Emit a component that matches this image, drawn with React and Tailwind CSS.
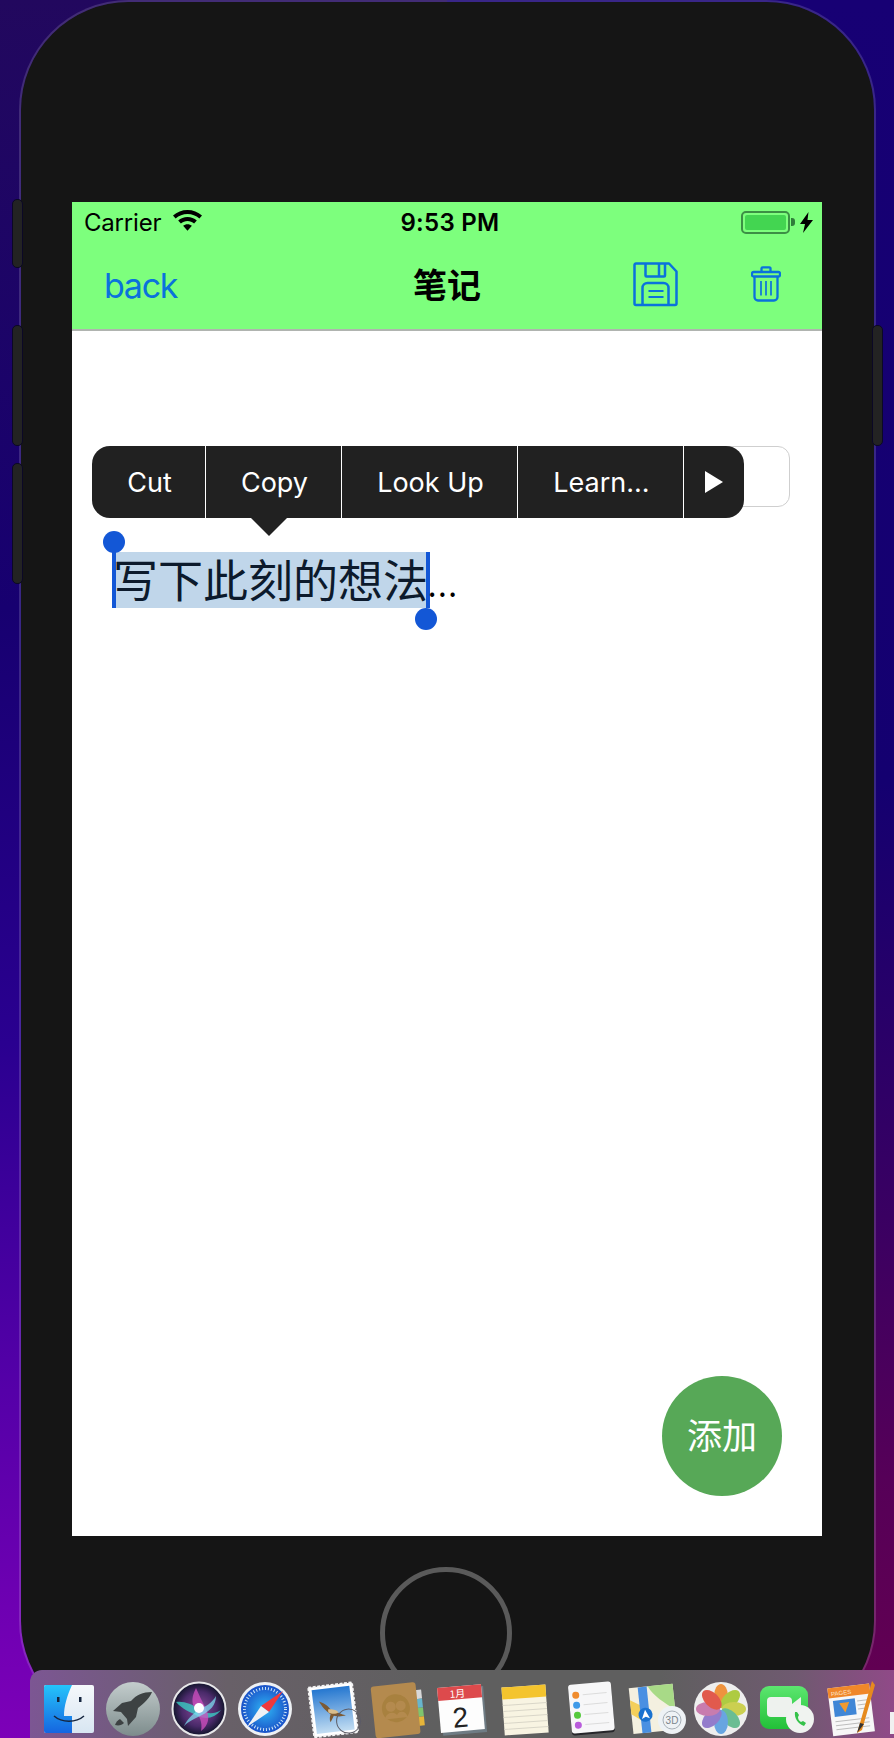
import React from 'react'

const sans = 'font-["Inter","Noto_Sans_CJK_SC",sans-serif]'

function SideButton({ className }) {
  return <div className={`absolute z-20 w-[11px] rounded-[5px] bg-[#232323] border border-[#0b0826] ${className}`} />
}

function Wifi() {
  return (
    <svg width="29" height="21" viewBox="0 0 29 21" fill="#000">
      <path d="M14.5 0C9 0 4 2 0 5.6l2.6 2.9C6 5.5 10 3.9 14.5 3.9s8.500 1.600 11.900 4.600L29 5.600C25 2 20 0 14.500 0z" />
      <path d="M14.500 7c-3.600 0-6.800 1.300-9.300 3.500l2.700 3c1.800-1.500 4.100-2.500 6.600-2.500s4.800 1 6.600 2.500l2.700-3C21.300 8.300 18.100 7 14.500 7z" />
      <path d="M14.500 14.200c-1.700 0-3.200.6-4.400 1.600l4.400 5 4.400-5c-1.200-1-2.700-1.600-4.400-1.600z" />
    </svg>
  )
}

function Battery() {
  return (
    <div className="flex items-center">
      <div className="w-[49px] h-[23px] rounded-[5px] border-2 border-[#3c8f45] p-[2px]">
        <div className="w-full h-full rounded-[2px] bg-[#43d551]" />
      </div>
      <div className="w-[4px] h-[8px] ml-[1px] rounded-r-[3px] bg-[#2f7d3a]" />
      <svg className="ml-[5px]" width="13" height="21" viewBox="0 0 13 21" fill="#000">
        <path d="M8.500 0L0 12h5l-2 9 10-13H7.500z" />
      </svg>
    </div>
  )
}

function SaveIcon() {
  return (
    <svg className="block" width="45" height="45" viewBox="0 0 45 45" fill="none" stroke="#0a72dc" strokeWidth="2.500" strokeLinejoin="round">
      <path d="M1.500 3a1.500 1.500 0 0 1 1.500-1.500h33l7.500 8v32a1.500 1.500 0 0 1-1.500 1.500H3a1.500 1.500 0 0 1-1.500-1.500z" />
      <path d="M12.500 2v11.500a1 1 0 0 0 1 1H31a1 1 0 0 0 1-1V2" />
      <path d="M26 2v12" />
      <path d="M9.500 43V26a5 5 0 0 1 5-5h16a5 5 0 0 1 5 5v17" />
      <path d="M15.500 29h15M15.500 35h15" strokeWidth="2.200" />
    </svg>
  )
}

function TrashIcon() {
  return (
    <svg className="block" width="30" height="36" viewBox="0 0 30 36" fill="none" stroke="#0a72dc" strokeWidth="2.300" strokeLinejoin="round">
      <rect x="1" y="6" width="28" height="4.500" rx="1.500" />
      <path d="M10.500 6V2.500a1.200 1.200 0 0 1 1.200-1.200h6.600a1.200 1.200 0 0 1 1.200 1.200V6" />
      <path d="M3.500 10.500V31a3.500 3.500 0 0 0 3.500 3.500h16a3.500 3.500 0 0 0 3.500-3.500V10.500" />
      <path d="M10 15v14.500M15 15v14.500M20 15v14.500" strokeWidth="1.700" />
    </svg>
  )
}

function ContextMenu() {
  const items = [
    { label: 'Cut', w: 'w-[114px]' },
    { label: 'Copy', w: 'w-[136px]' },
    { label: 'Look Up', w: 'w-[176px]' },
    { label: 'Learn...', w: 'w-[166px]' },
  ]
  return (
    <div className="absolute left-[20px] top-[115px] w-[652px]">
      <div className="flex h-[72px] rounded-[18px] bg-[#212121] overflow-hidden">
        {items.map(it => (
          <div key={it.label} className={`${it.w} flex items-center justify-center border-r border-white text-white text-[27px] pl-[2px] pt-[2px]`}>
            {it.label}
          </div>
        ))}
        <div className="flex-1 flex items-center justify-center">
          <div className="w-0 h-0 border-y-[11px] border-y-transparent border-l-[18px] border-l-white" />
        </div>
      </div>
      <div className="ml-[159px] w-0 h-0 border-x-[18px] border-x-transparent border-t-[18px] border-t-[#212121]" />
    </div>
  )
}

function Selection() {
  return (
    <div className="relative mt-[45px] ml-[40px] flex items-center h-[56px] text-[45px] leading-[53px] text-black font-['Noto_Sans_CJK_SC',sans-serif]">
      <span className="bg-[#c0d6ea] h-[56px] border-l-4 border-r-4 border-[#1357d6] w-[318px] whitespace-nowrap text-[#0c1a2c]">
        <span className="block -ml-[3px]">写下此刻的想法</span>
      </span>
      <span className="-ml-[3px] -mt-[4px] text-[41px] font-light">...</span>
      <div className="absolute left-[-9px] top-[-21px] w-[22px] h-[22px] rounded-full bg-[#1357d6]" />
      <div className="absolute left-[303px] top-[56px] w-[22px] h-[22px] rounded-full bg-[#1357d6]" />
    </div>
  )
}

function Dock() {
  return (
    <div className="absolute z-30 left-[30px] top-[1670px] w-[900px] h-[80px] rounded-tl-[12px] bg-[linear-gradient(90deg,#7c5693_0%,#686068_22%,#5f5f5f_45%,#5f5f5f_70%,#6f5a70_85%,#93488a_97%)]">
      <svg className="block" width="900" height="68" viewBox="30 1670 900 68">
        <defs>
          <linearGradient id="finderL" x1="0" y1="0" x2="0" y2="1"><stop offset="0" stopColor="#25c4fb" /><stop offset="1" stopColor="#1565e0" /></linearGradient>
          <linearGradient id="finderR" x1="0" y1="0" x2="0" y2="1"><stop offset="0" stopColor="#f5f8fb" /><stop offset="1" stopColor="#d8e6f2" /></linearGradient>
          <linearGradient id="rocketBg" x1="0" y1="0" x2="0" y2="1"><stop offset="0" stopColor="#c4cdcd" /><stop offset="1" stopColor="#7d8c8c" /></linearGradient>
          <radialGradient id="siriBg"><stop offset="0" stopColor="#8a4a9a" /><stop offset="0.65" stopColor="#4a2a6a" /><stop offset="1" stopColor="#10142a" /></radialGradient>
          <radialGradient id="safariBg"><stop offset="0" stopColor="#2fb5f5" /><stop offset="1" stopColor="#1a52c8" /></radialGradient>
          <linearGradient id="mailBg" x1="0" y1="0" x2="0" y2="1"><stop offset="0" stopColor="#2577d0" /><stop offset="1" stopColor="#c2ddf2" /></linearGradient>
          <linearGradient id="faceBg" x1="0" y1="0" x2="0" y2="1"><stop offset="0" stopColor="#5ce66f" /><stop offset="1" stopColor="#22c038" /></linearGradient>
        </defs>

        {/* finder */}
        <rect x="44" y="1685" width="50" height="48" rx="2" fill="url(#finderR)" />
        <path d="M46 1685h26c-5 11-8 21-8 31h8v17H46a2 2 0 0 1-2-2v-44a2 2 0 0 1 2-2z" fill="url(#finderL)" />
        <rect x="57" y="1697" width="2.500" height="5" fill="#15253f" />
        <rect x="79" y="1697" width="2.500" height="5" fill="#15253f" />
        <path d="M54 1716c8 7 22 7 30 0" fill="none" stroke="#15253f" strokeWidth="1.500" />

        {/* launchpad */}
        <circle cx="133" cy="1709" r="27" fill="url(#rocketBg)" />
        <path d="M152 1692c-9 0-16 3-21 9l-9 2-9 8 8 1 6 7 1 7 8-9 2-9c7-5 12-11 14-16z" fill="#3d4243" />
        <path d="M115 1725c1-3 3-5 5-6l4 4c-2 2-5 3-9 2z" fill="#3d4243" />

        {/* siri */}
        <circle cx="199" cy="1709" r="26.500" fill="url(#siriBg)" stroke="#e8e8ea" strokeWidth="2" />
        <path d="M176 1702c8-1 16 2 23 7s14 6 22 1c-6 8-15 10-23 6s-16-7-22-14z" fill="#38d6c8" opacity="0.75" />
        <path d="M196 1688c-4 8-5 14-1 21s8 13 6 22c8-6 9-14 5-22s-7-14-10-21z" fill="#d24fc0" opacity="0.75" />
        <path d="M184 1726c3-6 8-12 15-16s13-7 17-14c0 9-6 15-14 19s-13 6-18 11z" fill="#7fe6f5" opacity="0.7" />
        <circle cx="199" cy="1708" r="5" fill="#fff" />

        {/* safari */}
        <circle cx="265" cy="1709" r="27" fill="#eef1f4" />
        <circle cx="265" cy="1709" r="24" fill="url(#safariBg)" />
        <circle cx="265" cy="1709" r="20.500" fill="none" stroke="#cfe6f8" strokeWidth="3" strokeDasharray="1 2" />
        <path d="M283 1691l-22 15 8 6z" fill="#f0393c" />
        <path d="M247 1727l22-15-8-6z" fill="#f0f2f5" />

        {/* mail */}
        <g transform="rotate(-7 332 1709)">
          <rect x="311" y="1685" width="44" height="50" fill="#fff" stroke="#f4f4f4" strokeWidth="2" strokeDasharray="3 1.500" />
          <rect x="314" y="1688" width="38" height="44" fill="url(#mailBg)" />
          <path d="M320 1700c7 3 10 8 12 12 5 0 8 3 13 5-5 1-9 0-12-1l-4 6c-1-3 0-6 1-8-4-3-8-9-10-14z" fill="#7d5a33" />
          <path d="M328 1709c4 0 8 1 10 4-3 2-7 1-10-1z" fill="#d9bd8c" />
          <circle cx="347" cy="1723" r="12" fill="none" stroke="#5c5c66" strokeWidth="1" />
        </g>

        {/* contacts */}
        <g transform="rotate(-6 398 1709)">
          <rect x="416" y="1692" width="7" height="9" fill="#d8d8d8" />
          <rect x="416" y="1701" width="7" height="9" fill="#68b6ce" />
          <rect x="416" y="1710" width="7" height="9" fill="#7fc46e" />
          <rect x="416" y="1719" width="7" height="9" fill="#e6b53a" />
          <rect x="373" y="1684" width="45" height="52" rx="3" fill="#b48a4e" />
          <circle cx="396" cy="1708" r="14" fill="#a8813f" />
          <circle cx="391" cy="1706" r="5" fill="#b48a4e" />
          <circle cx="401" cy="1706" r="5" fill="#b48a4e" />
          <path d="M384 1718c1-4 4-6 7-6s6 2 7 6M395 1718c1-4 3-6 6-6s5 2 6 6" fill="#b48a4e" />
        </g>

        {/* calendar */}
        <g transform="rotate(-5 462 1709)">
          <rect x="441" y="1688" width="44" height="46" fill="#6f7c84" />
          <rect x="439" y="1686" width="44" height="45" fill="#fdfdfd" />
          <rect x="439" y="1686" width="44" height="13" fill="#dd4a4c" />
          <text x="451" y="1697" fontSize="10" fill="#fff" fontFamily="Noto Sans CJK SC, sans-serif">1月</text>
          <text x="452" y="1727" fontSize="28" fill="#222" fontFamily="Liberation Sans, sans-serif">2</text>
        </g>

        {/* notes */}
        <g transform="rotate(-4 525 1709)">
          <rect x="503" y="1686" width="44" height="48" fill="#f8f4e2" />
          <rect x="503" y="1686" width="44" height="12" fill="#f4c42e" />
          <path d="M503 1704h44M503 1710h44M503 1716h44M503 1722h44M503 1728h44" stroke="#d9d6c8" strokeWidth="1" />
        </g>

        {/* reminders */}
        <g transform="rotate(-5 591 1709)">
          <rect x="570" y="1684" width="43" height="50" rx="3" fill="#26262a" />
          <rect x="570" y="1683" width="43" height="49" rx="3" fill="#f7f7f8" />
          <circle cx="577" cy="1694" r="3.500" fill="#f08c2e" />
          <circle cx="577" cy="1704" r="3.500" fill="#3f9ae8" />
          <circle cx="577" cy="1714" r="3.500" fill="#56c93d" />
          <circle cx="577" cy="1724" r="3.500" fill="#b95cdc" />
          <path d="M584 1694h24M584 1704h24M584 1714h24M584 1724h24" stroke="#dcdcdc" strokeWidth="1" />
        </g>

        {/* maps */}
        <g transform="rotate(-6 652 1709)">
          <rect x="631" y="1686" width="44" height="46" fill="#f4f0e0" />
          <path d="M650 1686h25v26c-10-8-20-15-25-26z" fill="#a8da87" />
          <path d="M631 1698l16 10-4 13-12-9z" fill="#f4cf5a" />
          <rect x="640" y="1686" width="9" height="46" fill="#4a90e2" />
          <circle cx="645" cy="1714" r="7" fill="#1a72d0" />
          <path d="M645 1709l4 9-4-2-4 2z" fill="#fff" />
        </g>
        <circle cx="672" cy="1720" r="14" fill="#eef2f5" />
        <circle cx="672" cy="1720" r="9" fill="none" stroke="#a7b0b8" strokeWidth="1" />
        <text x="672" y="1724" fontSize="10" textAnchor="middle" fill="#7b848c" fontFamily="Liberation Sans, sans-serif">3D</text>

        {/* photos */}
        <circle cx="721" cy="1709" r="27" fill="#eeeeee" />
        <g opacity="0.9">
          <ellipse cx="721" cy="1696" rx="7" ry="12" fill="#f08a2c" />
          <ellipse cx="721" cy="1696" rx="7" ry="12" fill="#a8c830" transform="rotate(45 721 1709)" />
          <ellipse cx="721" cy="1696" rx="7" ry="12" fill="#c8cc40" transform="rotate(90 721 1709)" />
          <ellipse cx="721" cy="1696" rx="7" ry="12" fill="#5cb88a" transform="rotate(135 721 1709)" />
          <ellipse cx="721" cy="1696" rx="7" ry="12" fill="#5a9ee0" transform="rotate(180 721 1709)" />
          <ellipse cx="721" cy="1696" rx="7" ry="12" fill="#8a70c8" transform="rotate(225 721 1709)" />
          <ellipse cx="721" cy="1696" rx="7" ry="12" fill="#c470a8" transform="rotate(270 721 1709)" />
          <ellipse cx="721" cy="1696" rx="7" ry="12" fill="#e04a3c" transform="rotate(315 721 1709)" />
        </g>

        {/* facetime */}
        <rect x="760" y="1686" width="48" height="43" rx="9" fill="url(#faceBg)" />
        <rect x="767" y="1697" width="25" height="20" rx="4" fill="#eef2ee" />
        <path d="M792 1704l9-7v20l-9-7z" fill="#eef2ee" />
        <circle cx="800" cy="1719" r="14" fill="#f0f3f0" />
        <path d="M795 1712c-1 6 3 12 9 14l2-3-3-2-2 1c-2-1-3-3-3-5l1-2-2-3z" fill="#35c24a" />

        {/* pages */}
        <g transform="rotate(-7 850 1709)">
          <rect x="830" y="1686" width="42" height="48" fill="#f7f7f7" />
          <rect x="830" y="1686" width="42" height="10" fill="#f0872a" />
          <text x="833" y="1694" fontSize="6" fill="#fde5c8" fontFamily="Liberation Sans, sans-serif">PAGES</text>
          <rect x="834" y="1699" width="22" height="16" fill="#3f86d6" />
          <path d="M840 1702h10l-5 10z" fill="#f09a30" />
          <path d="M834 1720h34M834 1724h34M834 1728h34M858 1702h10M858 1706h10M858 1710h10" stroke="#bdbdbd" strokeWidth="1" />
        </g>
        <path d="M872 1681l-12 42 -3 10 5-3 13-45z" fill="#e68a1e" />
        <path d="M857 1733l3-10 4 1z" fill="#333" />

        <rect x="890" y="1712" width="8" height="22" fill="#f1f1f1" />
      </svg>
    </div>
  )
}

export default function App() {
  return (
    <div className={`relative w-[894px] h-[1738px] overflow-hidden pl-[19px] ${sans} [background:linear-gradient(180deg,#22085e_0%,#170070_35%,#2a0090_60%,#5500a8_80%,#7d00b8_100%)_left/50%_100%_no-repeat,linear-gradient(180deg,#170074_0%,#140070_45%,#3a0062_70%,#560058_85%,#650050_100%)_right/50%_100%_no-repeat]`}>
      <SideButton className="left-[12px] top-[199px] h-[69px]" />
      <SideButton className="left-[12px] top-[325px] h-[121px]" />
      <SideButton className="left-[12px] top-[463px] h-[121px]" />
      <SideButton className="left-[872px] top-[325px] h-[121px]" />

      {/* phone body */}
      <div className="relative z-10 w-[857px] h-[1731px] rounded-[110px] bg-[#151515] bg-clip-padding border-2 border-white/15 pt-[200px] pl-[51px]">
        <div className="relative flex flex-col w-[750px] h-[1334px] bg-white">
          <div className="bg-[#7dff7d]">
            <div className="relative flex items-center h-10 pl-[12px] pr-[9px] text-black">
              <span className="text-[24px] tracking-[-0.2px] mt-[1px]">Carrier</span>
              <span className="ml-[12px] -mt-[4px]"><Wifi /></span>
              <span className="absolute left-[6px] right-0 text-center text-[24px] font-semibold tracking-[0.3px] mt-[1px] pointer-events-none">9:53 PM</span>
              <span className="ml-auto"><Battery /></span>
            </div>
            <div className="relative flex items-center h-[89px] pl-[32px] border-b-2 border-[#b0b4b0]">
              <span className="text-[34px] tracking-[-1.3px] text-[#0a72dc]">back</span>
              <span className="absolute left-0 right-0 text-center text-[34px] font-bold text-black">笔记</span>
              <span className="ml-[456px] -mt-[2px]"><SaveIcon /></span>
              <span className="ml-[73px] -mt-[4px]"><TrashIcon /></span>
            </div>
          </div>

          <div className="relative flex-1">
            <div className="ml-[30px] mr-[32px] mt-[115px] h-[61px] rounded-[12px] border border-[#cfcfcf]" />
            <Selection />
            <ContextMenu />
            <div className="absolute right-[40px] bottom-[40px] w-[120px] h-[120px] rounded-full bg-[#57a857] flex items-center justify-center text-white text-[35px]">
              添加
            </div>
          </div>
        </div>

        {/* home button */}
        <div className="ml-[308px] mt-[31px] w-[132px] h-[132px] rounded-full border-[5px] border-[#5a5a5a]" />
      </div>

      <Dock />
    </div>
  )
}
